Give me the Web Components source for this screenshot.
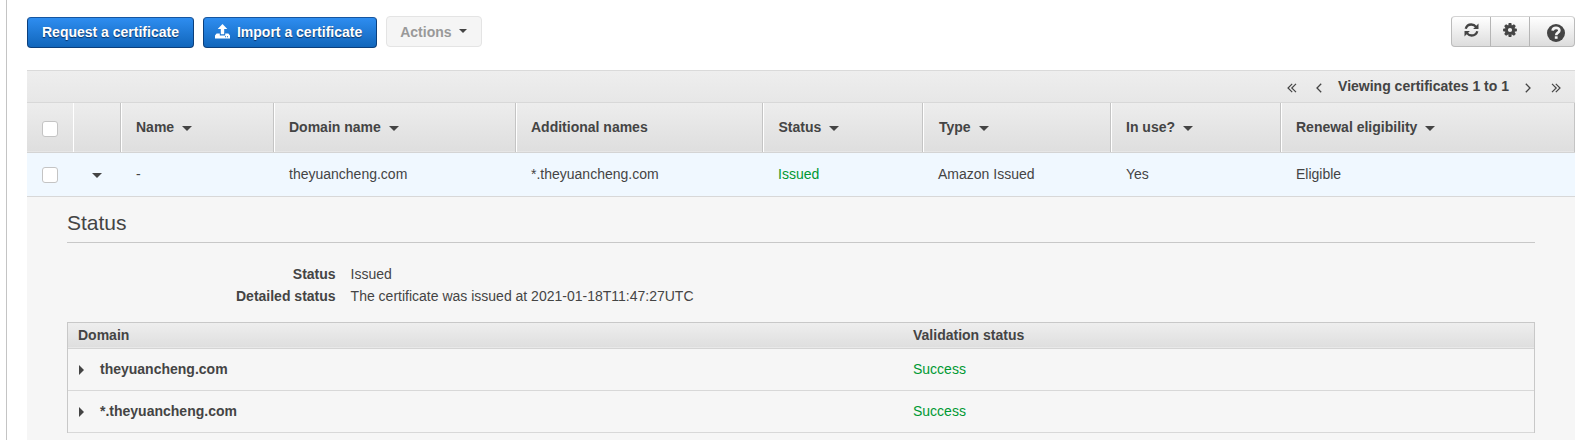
<!DOCTYPE html>
<html lang="en">
<head>
<meta charset="utf-8">
<title>Certificates</title>
<style>
html,body{margin:0;height:100%;overflow:hidden;background:#fff}
body{font:14px/16px "Liberation Sans",Arial,sans-serif;color:#444}
</style>
</head>
<body>
<cert-app></cert-app>
<script>
function define(name, html) {
  customElements.define(name, class extends HTMLElement {
    constructor() {
      super();
      const t = document.createElement('template');
      t.innerHTML = html;
      this.attachShadow({mode: 'open'}).append(t.content.cloneNode(true));
    }
  });
}

define('ui-button', `<style>
:host{display:flex;align-items:center;box-sizing:border-box;height:31px;padding:0 14px 2px;border:1px solid #0b3f7c;border-top-color:#1656a0;border-radius:4px;background:linear-gradient(#2e8df0,#1166bb);color:#fff;font-weight:bold;text-shadow:0 1px 1px #0a2f60;white-space:nowrap}
:host([disabled]){background:#f5f5f5;border-color:#e4e4e4;color:#999;text-shadow:none;padding:0 14px 0 13px}
</style><slot></slot>`);

define('icon-upload', `<style>:host{display:block;width:15px;height:15px;margin-right:7px}svg{display:block}</style>
<svg width="15" height="15" viewBox="0 0 15 15"><path fill="#fff" d="M7.500 0L12.300 5H9.200v5.200H5.800V5H2.700zM1.600 9.600H4.800v1.800h5.400V9.600h3.200L15 11.600V14.500H0V11.600z"/><path fill="#1a73cd" d="M10 12.300h1v1h-1zM12 12.300h1v1h-1z"/></svg>`);

define('icon-caret', `<style>:host{display:block;flex:none;width:10px;height:5px}:host([right]){width:5px;height:10px}:host([small]){width:8px;height:4px}svg{display:none;width:100%;height:100%}:host(:not([right])) .d,:host([right]) .r{display:block}</style>
<svg class="d" viewBox="0 0 10 5" preserveAspectRatio="none"><path fill="#444" d="M0 0h10L5 5z"/></svg>
<svg class="r" viewBox="0 0 5 10"><path fill="#444" d="M0 0l5 5-5 5z"/></svg>`);

define('ui-checkbox', `<style>:host{display:block;box-sizing:border-box;width:16px;height:16px;border:1px solid #c4c4c4;border-radius:3px;background:#fff}</style>`);

define('icon-group', `<style>
:host{display:flex;box-sizing:border-box;width:124px;height:31px;border:1px solid #bbb;border-top-color:#d4d4d4;border-radius:4px;background:linear-gradient(#fff,#ddd)}
div{box-sizing:border-box;width:39px;border-right:1px solid #b5b5b5;padding:6px 0 0 12px}
div:last-child{width:44px;border:0;padding:7px 0 0 17px}
svg{display:block}
</style>
<div><svg width="15" height="14" viewBox="0 0 15 14"><g fill="none" stroke="#444" stroke-width="2.300"><path d="M1.700 5.800C2.500 3 4.700 1.500 7.300 1.500c2 0 3.600.9 4.800 2.400M13.300 8.200c-.8 2.800-3 4.300-5.600 4.300-2 0-3.600-.9-4.800-2.400"/></g><path fill="#444" d="M14.500 .6v5.400H9.100zM.5 13.400v-5.400h5.400z"/></svg></div>
<div><svg width="14" height="14" viewBox="-7 -7 14 14"><g fill="#444"><path d="M-1.300-6.900h2.600l.5 2.500h-3.600z"/><path d="M-1.300-6.900h2.600l.5 2.500h-3.600z" transform="rotate(45)"/><path d="M-1.300-6.900h2.600l.5 2.500h-3.600z" transform="rotate(90)"/><path d="M-1.300-6.900h2.600l.5 2.500h-3.600z" transform="rotate(135)"/><path d="M-1.300-6.900h2.600l.5 2.500h-3.600z" transform="rotate(180)"/><path d="M-1.300-6.900h2.600l.5 2.500h-3.600z" transform="rotate(225)"/><path d="M-1.300-6.900h2.600l.5 2.500h-3.600z" transform="rotate(270)"/><path d="M-1.300-6.900h2.600l.5 2.500h-3.600z" transform="rotate(315)"/></g><circle r="3.600" fill="none" stroke="#444" stroke-width="3"/></svg></div>
<div><svg width="18" height="18" viewBox="0 0 18 18"><circle cx="9" cy="9" r="9" fill="#444"/><path fill="none" stroke="#f4f4f4" stroke-width="2.600" d="M5.600 6.700C5.800 4.700 7 3.900 9 3.900c2.100 0 3.400 1 3.400 2.600 0 2.200-3.200 2.100-3.200 4.700"/><path fill="#f4f4f4" d="M7.800 12.300h2.800v2.500H7.800z"/></svg></div>`);

define('icon-chevron', `<style>:host{display:block;flex:none}svg{display:block}:host([next]) svg{transform:scaleX(-1)}.b{display:none}:host([double]) .b{display:block}:host([double]) .a{display:none}</style>
<svg class="a" width="6" height="10" viewBox="0 0 6 10"><path fill="none" stroke="#444" stroke-width="1.300" d="M5.200 .8L1 5l4.200 4.200"/></svg>
<svg class="b" width="10" height="10" viewBox="0 0 10 10"><path fill="none" stroke="#444" stroke-width="1.200" d="M5.200 .8L1 5l4.200 4.200M9 .8L4.800 5 9 9.200"/></svg>`);

define('table-pager', `<style>
:host{display:flex;box-sizing:border-box;height:33px;justify-content:flex-end;border-top:1px solid #dadada;border-bottom:1px solid #d8d8d8;background:linear-gradient(#eee,#e7e7e7);padding:7px 14px 0 0;font-weight:bold}
icon-chevron{margin-top:5px}
span{margin:0 16px 0 16px}
</style><icon-chevron double></icon-chevron><icon-chevron style="margin-left:19px"></icon-chevron><span>Viewing certificates 1 to 1</span><icon-chevron next></icon-chevron><icon-chevron next double style="margin-left:20px"></icon-chevron>`);

define('head-cell', `<style>
:host{display:flex;box-sizing:border-box;border-right:1px solid #c4c4c4;border-left:1px solid #fff;padding:16px 0 0 15px;font-weight:bold;white-space:nowrap}
:host([first]){border-left:0;border-right:0}:host([sort]) icon-caret{display:block}
icon-caret{display:none;margin:7px 0 0 8px}
</style><slot></slot><icon-caret></icon-caret>`);

define('cert-table', `<style>
:host{display:block}
.g{display:grid;grid-template-columns:46px 48px 153px 242px 247px 160px 188px 170px 294px}
.h{height:49px;background:linear-gradient(#ededed,#dedede);border-bottom:1px solid #d4d4d4;box-shadow:inset 0 -1px #e6e6e6}
.r{height:43px;background:#f0f8ff;border-bottom:1px solid #d8d8d8}
.r span{padding:13px 0 0 15px;white-space:nowrap}
.r ui-checkbox{margin:14px 0 0 15px}
.r icon-caret{margin:20px 0 0 19px}
.ok{color:#093}
</style>
<table-pager></table-pager>
<div class="g h"><head-cell first><ui-checkbox style="margin-top:2px"></ui-checkbox></head-cell><head-cell></head-cell><head-cell sort style="padding-left:14px">Name</head-cell><head-cell sort style="padding-left:14px">Domain name</head-cell><head-cell style="padding-left:14px">Additional names</head-cell><head-cell sort style="padding-left:14.500px">Status</head-cell><head-cell sort>Type</head-cell><head-cell sort style="padding-left:14px">In use?</head-cell><head-cell sort style="padding-left:14px">Renewal eligibility</head-cell></div>
<div class="g r"><ui-checkbox></ui-checkbox><icon-caret></icon-caret><span>-</span><span>theyuancheng.com</span><span>*.theyuancheng.com</span><span class="ok">Issued</span><span>Amazon Issued</span><span>Yes</span><span>Eligible</span></div>`);

define('domain-row', `<style>
:host{display:grid;grid-template-columns:10px 22px 813px 1fr;height:41px;border-bottom:1px solid #d8d8d8}
icon-caret{grid-column:2;margin:16px 0 0 1px}
b,span{margin-top:12px}span{color:#093}
</style><icon-caret right></icon-caret><b><slot></slot></b><span>Success</span>`);

define('domain-table', `<style>
:host{display:block;border:1px solid #c8c8c8;border-bottom:0}
.h{display:grid;grid-template-columns:845px 1fr;height:25px;border-bottom:1px solid #d4d4d4;background:linear-gradient(#eee,#dedede);box-shadow:inset 0 -1px #e8e8e8;font-weight:bold}
.h span{padding-top:4px}.h span:first-child{padding-left:10px}
</style><div class="h"><span>Domain</span><span>Validation status</span></div><domain-row>theyuancheng.com</domain-row><domain-row>*.theyuancheng.com</domain-row>`);

define('cert-details', `<style>
:host{display:block;background:#f6f6f6;padding:14px 40px 0;height:230px}
h2{margin:0;font-weight:normal;font-size:21px;line-height:24px;padding-bottom:7px;border-bottom:1px solid #c8c8c8}
dl{display:grid;grid-template-columns:268.600px 1fr;column-gap:15px;row-gap:6px;margin:23px 0 18px}
dt{text-align:right;font-weight:bold}dd{margin:0}
</style><h2>Status</h2><dl><dt>Status</dt><dd>Issued</dd><dt>Detailed status</dt><dd>The certificate was issued at 2021-01-18T11:47:27UTC</dd></dl><domain-table></domain-table>`);

define('cert-app', `<style>
:host{display:block;box-sizing:border-box;height:440px;margin-left:6px;border-left:1px solid #c4c4c4;padding-left:20px;overflow:hidden}
nav{display:flex;align-items:flex-start;gap:9px;box-sizing:border-box;height:70px;padding-top:16px}
ui-button{margin-top:1px}ui-button[disabled]{margin-top:0}
icon-group{margin-left:auto}
</style>
<nav><ui-button>Request a certificate</ui-button><ui-button style="padding-left:11px"><icon-upload></icon-upload>Import a certificate</ui-button><ui-button disabled>Actions<icon-caret small style="margin:-2px 0 0 7px"></icon-caret></ui-button><icon-group></icon-group></nav>
<cert-table></cert-table><cert-details></cert-details>`);
</script>
</body>
</html>
